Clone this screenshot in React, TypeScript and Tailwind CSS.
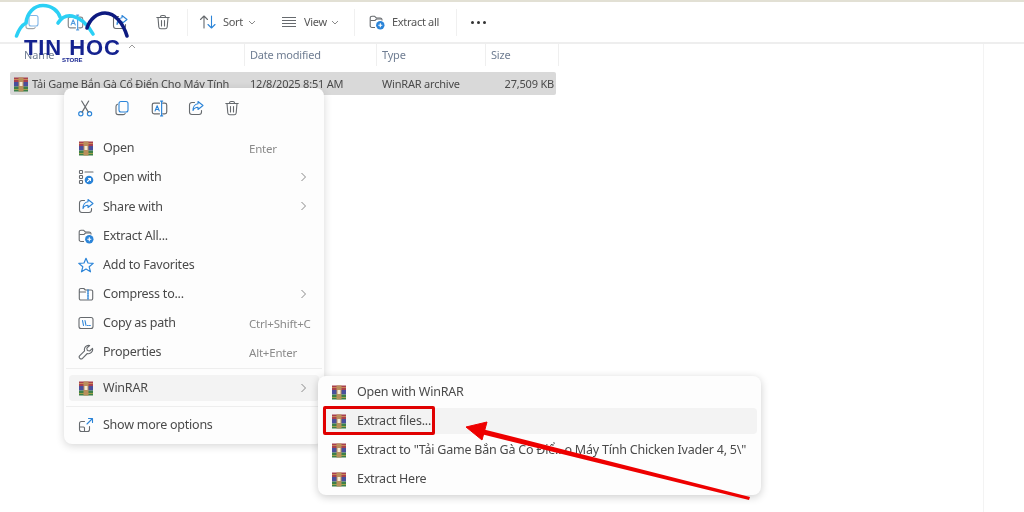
import React from "react";

const G = "#666a6e";
const B = "#2b84d8";

function Rar({ className = "" }: { className?: string }) {
  return (
    <svg width="16" height="15" viewBox="0 0 16 15" className={`shrink-0 ${className}`}>
      <rect x="1" y="0.5" width="14" height="4.500" fill="#a8404e" />
      <rect x="1" y="5" width="14" height="4.500" fill="#4a4f9c" />
      <rect x="1" y="9.500" width="14" height="5" fill="#3d8048" />
      <rect x="1" y="2.200" width="14" height=".7" fill="#d9a55a" />
      <rect x="1" y="12" width="14" height=".7" fill="#c9b24a" />
      <rect x="5.500" y="0.500" width="5" height="14" fill="#b98f5c" />
      <rect x="6.500" y="5" width="3" height="4" fill="#f3ead2" />
    </svg>
  );
}

function I({ children, size = 16, className = "" }: { children: React.ReactNode; size?: number; className?: string }) {
  return (
    <svg width={size} height={size} viewBox="0 0 16 16" fill="none" stroke={G} strokeWidth="1.1" strokeLinecap="round" strokeLinejoin="round" className={className}>
      {children}
    </svg>
  );
}

const Scissors = () => (
  <I size={17}>
    <circle cx="3.600" cy="13" r="2" stroke={B} />
    <circle cx="11.800" cy="13" r="2" stroke={B} />
    <path d="M4.800 11.400 11 1M10.700 11.400 4.400 1" />
  </I>
);
const CopyI = () => (
  <I size={16}>
    <rect x="5" y="1.500" width="9" height="10.500" rx="2" stroke={B} />
    <path d="M3.500 4.200C2.400 4.600 2 5.400 2 6.400v6c0 1.400.9 2.200 2.200 2.200h5c1 0 1.700-.4 2-1.200" />
  </I>
);
const RenameI = () => (
  <I size={17}>
    <path d="M8 3H3a1.800 1.800 0 0 0-1.800 1.800v6.400A1.800 1.800 0 0 0 3 13h5M11 3h2a1.800 1.800 0 0 1 1.800 1.800v6.400A1.800 1.800 0 0 1 13 13h-2" />
    <path d="M3.800 10.400 5.800 5.400l2 5M4.500 9h2.600" strokeWidth="1" stroke={B} />
    <path d="M9 1h2M9 15h2M10 1v14" stroke={B} />
  </I>
);
const ShareI = () => (
  <I size={16}>
    <path d="M6.500 2.500H4A2.500 2.500 0 0 0 1.500 5v7A2.500 2.500 0 0 0 4 14.500h7a2.500 2.500 0 0 0 2.500-2.500v-1.500" />
    <path d="M10 1.500 15 5.500 10 9.500V7.300C7.500 7.300 6 8.300 5 10.500 5 7 7 4 10 3.800Z" stroke={B} />
  </I>
);
const TrashI = () => (
  <I size={16}>
    <path d="M1.800 3.500h12.400M5.500 3.500V3a1.500 1.500 0 0 1 1.500-1.500h2A1.500 1.500 0 0 1 10.500 3v.5" />
    <path d="M3 3.500l.8 9.500A2 2 0 0 0 5.800 14.700h4.400a2 2 0 0 0 2-1.700L13 3.500M6.500 6.500v5.500M9.500 6.500v5.500" />
  </I>
);
const ExtractI = () => (
  <svg width="16" height="16" viewBox="0 0 16 16" fill="none" stroke={G} strokeWidth="1.1">
    <path d="M6 13.500H3A1.800 1.800 0 0 1 1.200 11.700V4A1.800 1.800 0 0 1 3 2.200h2.500l1.800 1.800H11A2 2 0 0 1 13 6v.5" />
    <path d="M1.500 6.500h4.500l1.500-1.500h4.500" />
    <circle cx="11.300" cy="11.300" r="4.200" fill={B} stroke="none" />
    <path d="M9.300 11.300h4M11.300 9.300v4" stroke="#fff" />
  </svg>
);
const OpenWithI = () => (
  <I size={16}>
    <rect x="1.500" y="1.500" width="3" height="3" rx=".6" />
    <rect x="1.500" y="6.500" width="3" height="3" rx=".6" />
    <rect x="1.500" y="11.500" width="3" height="3" rx=".6" />
    <path d="M7 3h8" />
    <circle cx="11" cy="11" r="4.300" fill={B} stroke="none" />
    <path d="M9.500 12.500 12.500 9.500M10.500 9.500h2v2" stroke="#fff" />
  </I>
);
const StarI = () => (
  <I size={16}>
    <path d="M8 1.300 10 6l5.200.4-4 3.400 1.300 5L8 12.100 3.500 14.800l1.300-5-4-3.400L6 6Z" stroke={B} strokeWidth="1.200" />
  </I>
);
const CompressI = () => (
  <I size={16}>
    <path d="M2.800 2.500h3l1.500 1.500h5.900A1.500 1.500 0 0 1 14.700 5.500v7a1.500 1.500 0 0 1-1.500 1.500H2.800a1.500 1.500 0 0 1-1.500-1.500V4a1.500 1.500 0 0 1 1.500-1.500Z" />
    <path d="M1.500 6h6" />
    <path d="M10 4v10" stroke={B} strokeWidth="1.500" strokeDasharray="1.500 1" />
  </I>
);
const PathI = () => (
  <I size={16}>
    <rect x="1" y="2.500" width="14" height="11" rx="2" />
    <path d="M4.500 5.500 5.500 10.500M7 5.500 8 10.500M9.500 10.500h.8M11.500 10.500h.8" stroke={B} />
  </I>
);
const WrenchI = () => (
  <I size={16}>
    <path d="M14.500 4.300 11.700 7 9.300 6.500 8.800 4.200 11.600 1.500A4.200 4.200 0 0 0 6.600 6.800L1.800 11.600A1.900 1.900 0 0 0 4.500 14.300L9.300 9.500A4.200 4.200 0 0 0 14.500 4.300Z" />
  </I>
);
const MoreI = () => (
  <I size={16}>
    <path d="M6.500 4.500H3.500A2 2 0 0 0 1.500 6.500v6a2 2 0 0 0 2 2h6a2 2 0 0 0 2-2v-3" />
    <path d="M1.500 10h4a1 1 0 0 1 1 1v3.500" />
    <path d="M9 7 14 2M10.500 1.500H14.500V5.500" stroke={B} />
  </I>
);
const Chevron = () => (
  <svg width="7" height="10" viewBox="0 0 7 10" fill="none" stroke="#8a8a8a" strokeWidth="1">
    <path d="M1.500 1 5.500 5 1.500 9" />
  </svg>
);
const Down = () => (
  <svg width="8" height="5" viewBox="0 0 8 5" fill="none" stroke="#8a8a8a" strokeWidth="1">
    <path d="M1 1 4 4 7 1" />
  </svg>
);

type Row = { icon: React.ReactNode; label: string; hint?: string; sub?: boolean };
const rows: Row[] = [
  { icon: <Rar />, label: "Open", hint: "Enter" },
  { icon: <OpenWithI />, label: "Open with", sub: true },
  { icon: <ShareI />, label: "Share with", sub: true },
  { icon: <ExtractI />, label: "Extract All..." },
  { icon: <StarI />, label: "Add to Favorites" },
  { icon: <CompressI />, label: "Compress to...", sub: true },
  { icon: <PathI />, label: "Copy as path", hint: "Ctrl+Shift+C" },
  { icon: <WrenchI />, label: "Properties", hint: "Alt+Enter" },
];

function MenuRow({ r, active }: { r: Row; active?: boolean }) {
  return (
    <div className={`mx-[5px] flex h-[26px] items-center rounded-[4px] pl-[8px] pr-[12px] ${active ? "bg-[#f3f3f3]" : ""}`}>
      <span className="flex w-[17px] justify-center">{r.icon}</span>
      <span className="ml-[9px] pt-[1px] tracking-[-0.24px] text-[#4a4a4a]">{r.label}</span>
      {r.hint && <span className="absolute left-[185px] pt-[1px] text-[11.5px] tracking-[-0.2px] text-[#8a8a8a]">{r.hint}</span>}
      {r.sub && <span className="ml-auto flex"><Chevron /></span>}
    </div>
  );
}

function Sep() {
  return <div className="h-[27px] w-px bg-[#f0f0f0]" />;
}

export default function App() {
  return (
    <div
      className="relative h-[512px] w-[1024px] overflow-hidden bg-white text-[12.5px] blur-[0.35px]"
      style={{ fontFamily: '"Noto Sans", "Open Sans", sans-serif' }}
    >
      <div className="h-[2px] bg-[#e2e0d4]" />
      {/* Toolbar */}
      <div className="flex h-[42px] items-center border-b-2 border-[#eeeeee] pl-[24px] text-[11px] tracking-[-0.3px] text-[#555]">
        <span className="flex w-[43px] justify-start opacity-60"><CopyI /></span>
        <span className="flex w-[45px] justify-start opacity-80"><RenameI /></span>
        <span className="flex w-[16px] justify-start"><ShareI /></span>
        <span className="ml-[27px]"><TrashI /></span>
        <span className="ml-[16px]"><Sep /></span>
        <span className="ml-[11px]">
          <svg width="18" height="16" viewBox="0 0 18 16" fill="none" stroke={G} strokeWidth="1.100" strokeLinecap="round" strokeLinejoin="round">
            <path d="M5 14V2M1.500 5.500 5 2 8.500 5.500" />
            <path d="M12.500 2v12M9 10.500l3.500 3.500 3.500-3.500" stroke={B} />
          </svg>
        </span>
        <span className="ml-[6px] w-[25px]">Sort</span>
        <span className="flex"><Down /></span>
        <span className="ml-[25px]">
          <svg width="16" height="12" viewBox="0 0 16 12" fill="none" stroke={G} strokeWidth="1.100">
            <path d="M1 1.500h14M1 4.500h14M1 7.500h14M1 10.500h14" />
          </svg>
        </span>
        <span className="ml-[7px] w-[27px]">View</span>
        <span className="flex"><Down /></span>
        <span className="ml-[15px]"><Sep /></span>
        <span className="ml-[14px]"><ExtractI /></span>
        <span className="ml-[7px] w-[47px] whitespace-nowrap">Extract all</span>
        <span className="ml-[17px]"><Sep /></span>
        <span className="ml-[14px] flex gap-[3px]">
          <i className="h-[3px] w-[3px] rounded-full bg-[#333]" />
          <i className="h-[3px] w-[3px] rounded-full bg-[#333]" />
          <i className="h-[3px] w-[3px] rounded-full bg-[#333]" />
        </span>
      </div>
      {/* Column header */}
      <div className="relative flex h-[22px] items-center text-[11px] tracking-[-0.2px] text-[#6f7d92]">
        <span className="w-[244px] pl-[24px]">Name</span>
        <span className="flex h-full w-[132px] items-center border-l border-[#efefef] pl-[5px]">Date modified</span>
        <span className="flex h-full w-[109px] items-center border-l border-[#efefef] pl-[5px]">Type</span>
        <span className="flex h-full w-[74px] items-center border-x border-[#efefef] pl-[5px]">Size</span>
        <svg width="8" height="5" viewBox="0 0 8 5" fill="none" stroke="#9a9a9a" strokeWidth="1" className="absolute left-[128px] top-0">
          <path d="M1 4 4 1 7 4" />
        </svg>
      </div>
      {/* Selected row */}
      <div className="ml-[10px] mt-[6px] flex h-[23px] w-[546px] items-center rounded-[2px] bg-[#d9d9d9] pt-[2px] text-[11px] tracking-[-0.2px] text-[#4a4a4a]">
        <span className="ml-[3px] flex w-[19px]"><Rar /></span>
        <span className="w-[218px] whitespace-nowrap">Tải Game Bắn Gà Cổ Điển Cho Máy Tính</span>
        <span className="w-[132px]">12/8/2025 8:51 AM</span>
        <span className="w-[95px]">WinRAR archive</span>
        <span className="w-[77px] text-right">27,509 KB</span>
      </div>
      {/* Right faint divider */}
      <div className="absolute bottom-0 left-[983px] top-[44px] w-px bg-[#f3f3f3]" />

      {/* Context menu */}
      <div className="absolute left-[64px] top-[88px] h-[356px] w-[260px] rounded-[8px] bg-[#fdfdfd] shadow-[0_2px_8px_rgba(0,0,0,0.16)]">
        <div className="flex h-[40px] items-center pl-[13px]">
          <span className="flex w-[36.500px]"><Scissors /></span>
          <span className="flex w-[37px]"><CopyI /></span>
          <span className="flex w-[37px]"><RenameI /></span>
          <span className="flex w-[36.500px]"><ShareI /></span>
          <TrashI />
        </div>
        <div className="mt-[7px] flex flex-col gap-[3.200px]">
          {rows.map((r) => (
            <MenuRow key={r.label} r={r} />
          ))}
        </div>
        <div className="mx-[2px] mt-[3px] h-px bg-[#eeeeee]" />
        <div className="mt-[6px]">
          <MenuRow r={{ icon: <Rar />, label: "WinRAR", sub: true }} active />
        </div>
        <div className="mx-[2px] mt-[5px] h-px bg-[#eeeeee]" />
        <div className="mt-[5px]">
          <MenuRow r={{ icon: <MoreI />, label: "Show more options" }} />
        </div>
      </div>

      {/* Submenu */}
      <div className="absolute left-[318px] top-[376px] h-[119px] w-[443px] rounded-[8px] bg-[#fdfdfd] pt-[3px] shadow-[0_2px_8px_rgba(0,0,0,0.2)]">
        <div className="flex flex-col gap-[3px]">
          {["Open with WinRAR", "Extract files...", 'Extract to "Tải Game Bắn Gà Cổ Điể...o Máy Tính Chicken Ivader 4, 5\\"', "Extract Here"].map((t, i) => (
            <div key={t} className={`mx-[4px] flex h-[26px] items-center rounded-[4px] pl-[9px] ${i === 1 ? "bg-[#f3f3f3]" : ""}`}>
              <Rar />
              <span className="ml-[10px] whitespace-nowrap pt-[1px] tracking-[-0.22px] text-[#4a4a4a]">{t}</span>
            </div>
          ))}
        </div>
      </div>

      {/* Red annotations */}
      <div className="absolute left-[323px] top-[406px] h-[29px] w-[112px] rounded-[2px] border-[3px] border-[#e00000]" />
      <svg className="absolute left-0 top-0" width="1024" height="512" viewBox="0 0 1024 512" fill="none">
        <path d="M482 429 750 497 749 500 481 434Z" fill="#ee0000" />
        <path d="M466 427 487 422 482 440Z" fill="#ee0000" stroke="#ee0000" strokeWidth="1" />
      </svg>

      {/* Logo */}
      <div className="absolute left-[14px] top-[3px] h-[62px] w-[120px]">
        <svg className="absolute left-0 top-0" width="120" height="40" viewBox="0 0 120 40" fill="none" strokeLinecap="round">
          <path d="M2.500 33C5 26 8 22 12 20 13 10 20 2.500 29 2.500 38 2.500 44 8 46 14M44 20C48 14 53 12 58 13 68 15 74 22 79 31" stroke="#2bd0f5" strokeWidth="3.600" />
          <path d="M73 25C76 16 83 10 91 10 101 10 109 20 113 33" stroke="#0d1a80" strokeWidth="3.600" />
        </svg>
        <div className="absolute left-[10px] top-[33px] whitespace-nowrap text-[22px] font-bold leading-[24px] tracking-[0.9px] text-[#14228f]" style={{ fontFamily: '"Liberation Sans", sans-serif' }}>
          TIN HOC
        </div>
        <div className="absolute left-[48px] top-[53px] text-[6px] font-bold leading-[8px] text-[#14228f]" style={{ fontFamily: '"Liberation Sans", sans-serif' }}>
          STORE
        </div>
      </div>
    </div>
  );
}
